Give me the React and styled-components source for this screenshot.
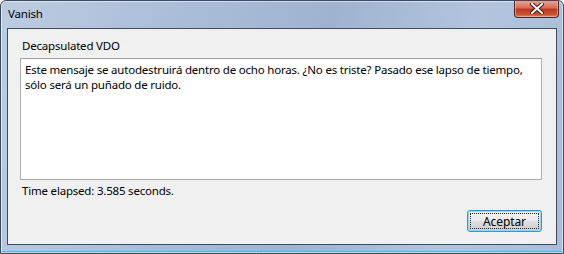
import React from 'react'
import styled, { createGlobalStyle } from 'styled-components'

const Global = createGlobalStyle`
  html, body {
    margin: 0;
    padding: 0;
    background: #ffffff;
  }
  body {
    font-family: "Noto Sans", "Open Sans", sans-serif;
  }
`

const Window = styled.div`
  width: 564px;
  height: 254px;
  box-sizing: border-box;
  display: flex;
  flex-direction: column;
  border: 1px solid #3b4a60;
  border-radius: 6px 6px 0 0;
  background: linear-gradient(100deg, #bccce0 0%, #aabdd8 30%, #9fb3d0 55%, #b3c5dd 80%, #a8bcd8 100%);
  box-shadow: inset 0 0 0 1px rgba(255, 255, 255, 0.55), inset 0 -2px 0 #47b8e8;
  overflow: hidden;
`

const TitleBar = styled.div`
  height: 27px;
  display: flex;
  align-items: flex-start;
  justify-content: space-between;
  padding-left: 7px;
`

const Title = styled.span`
  font-size: 11.5px;
  letter-spacing: -0.2px;
  line-height: 15px;
  padding-top: 5px;
  color: #000;
`

const CloseButton = styled.div`
  width: 45px;
  height: 18px;
  margin-right: 4px;
  margin-top: -1px;
  box-sizing: border-box;
  border: 1px solid #4a2a28;
  border-top: none;
  border-radius: 0 0 4px 4px;
  background: linear-gradient(180deg, #eba896 0%, #d86f58 45%, #bb3a22 55%, #cc5333 85%, #e4855f 100%);
  box-shadow: inset 0 0 0 1px rgba(255, 200, 190, 0.5);
  display: flex;
  align-items: center;
  justify-content: center;
`

const Client = styled.div`
  flex: 1;
  margin: 0 6px 8px 6px;
  border: 1px solid #3c4b62;
  background: #f0f0f0;
  display: flex;
  flex-direction: column;
  padding: 9px 14px 0 12px;
  font-size: 11.5px;
  letter-spacing: -0.2px;
  line-height: 15px;
  color: #000;
`

const Label = styled.div`
  padding-left: 2px;
  height: 20px;
`

const MessageBox = styled.div`
  height: 122px;
  box-sizing: border-box;
  border: 1px solid #abadb3;
  border-top-color: #a0a0a0;
  background: #fff;
  padding: 3px 4px;
  color: #000;
`

const Status = styled.div`
  padding: 3px 0 0 2px;
  height: 17px;
`

const ButtonRow = styled.div`
  display: flex;
  justify-content: flex-end;
  padding-top: 10px;
`

const Button = styled.button`
  width: 75px;
  height: 22px;
  box-sizing: border-box;
  border: 1px solid #3399cc;
  border-radius: 3px;
  background: linear-gradient(180deg, #f2f2f2 0%, #ebebeb 48%, #dddddd 52%, #d0d0d0 100%);
  box-shadow: inset 0 0 0 1px #8fd6f0;
  font-family: inherit;
  font-size: 12px;
  letter-spacing: -0.1px;
  color: #000;
  padding: 0;
  position: relative;
  &::after {
    content: '';
    position: absolute;
    inset: 2px;
    border: 1px dotted #222;
  }
`

export default function App() {
  return (
    <>
      <Global />
      <Window>
        <TitleBar>
          <Title>Vanish</Title>
          <CloseButton>
            <svg width="14" height="11" viewBox="0 0 14 11">
              <path d="M2 1 L12 10 M12 1 L2 10" stroke="#3a2020" strokeWidth="4" strokeLinecap="square" />
              <path d="M2 1 L12 10 M12 1 L2 10" stroke="#ffffff" strokeWidth="2" strokeLinecap="square" />
            </svg>
          </CloseButton>
        </TitleBar>
        <Client>
          <Label>Decapsulated VDO</Label>
          <MessageBox>
            Este mensaje se autodestruirá dentro de ocho horas. ¿No es triste? Pasado ese lapso de tiempo,
            sólo será un puñado de ruido.
          </MessageBox>
          <Status>Time elapsed: 3.585 seconds.</Status>
          <ButtonRow>
            <Button>Aceptar</Button>
          </ButtonRow>
        </Client>
      </Window>
    </>
  )
}
